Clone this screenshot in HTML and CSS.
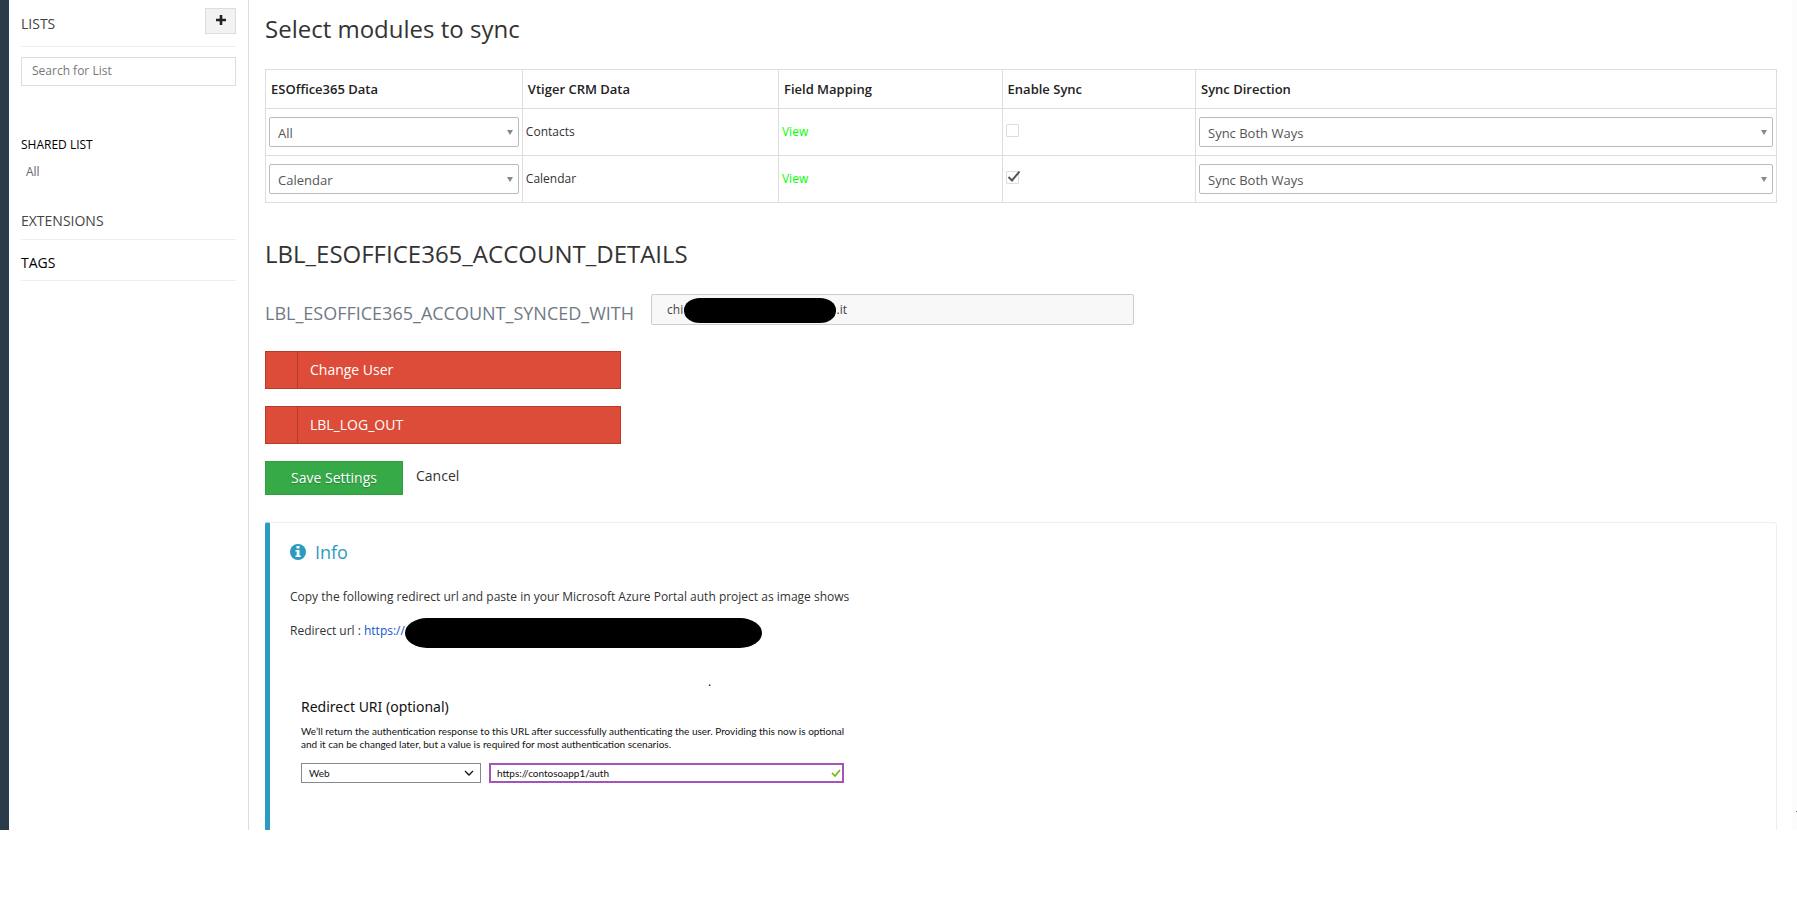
FILE: index.html
```
<!DOCTYPE html>
<html lang="en">
<head>
<meta charset="utf-8">
<title>Select modules to sync</title>
<link rel="stylesheet" href="styles.css">
</head>
<body>
<div class="app">
  <div class="rail"></div>
  <aside class="sidebar">
    <div class="lists-head">
      <h2 class="side-title">LISTS</h2>
      <button class="add" type="button" aria-label="Add list">
        <svg width="10" height="10" viewBox="0 0 10 10"><path d="M3.700 0h2.600v3.700H10v2.600H6.300V10H3.700V6.300H0V3.700h3.700z" fill="#222"/></svg>
      </button>
    </div>
    <input class="search" type="text" placeholder="Search for List" aria-label="Search for List">
    <h3 class="shared">SHARED LIST</h3>
    <a class="shared-item" href="#">All</a>
    <h2 class="side-title extensions">EXTENSIONS</h2>
    <h2 class="side-title tags">TAGS</h2>
  </aside>
  <main class="content">
    <h1 class="title">Select modules to sync</h1>
    <table class="modules">
      <colgroup><col class="c-data"><col class="c-crm"><col class="c-map"><col class="c-enable"><col></colgroup>
      <thead>
        <tr><th>ESOffice365 Data</th><th>Vtiger CRM Data</th><th>Field Mapping</th><th>Enable Sync</th><th>Sync Direction</th></tr>
      </thead>
      <tbody>
        <tr>
          <td><div class="pick"><select aria-label="Contacts source"><option>All</option></select></div></td>
          <td>Contacts</td>
          <td><a class="view" href="#">View</a></td>
          <td><span class="tick"><input class="check" type="checkbox" aria-label="Enable contacts sync"></span></td>
          <td><div class="pick"><select aria-label="Contacts sync direction"><option>Sync Both Ways</option></select></div></td>
        </tr>
        <tr>
          <td><div class="pick"><select aria-label="Calendar source"><option>Calendar</option></select></div></td>
          <td>Calendar</td>
          <td><a class="view" href="#">View</a></td>
          <td><span class="tick"><input class="check" type="checkbox" checked aria-label="Enable calendar sync"><svg width="13" height="12" viewBox="0 0 13 12"><path d="M1.500 6L5 9.500L12.500 0.500" fill="none" stroke="#555" stroke-width="2"/></svg></span></td>
          <td><div class="pick"><select aria-label="Calendar sync direction"><option>Sync Both Ways</option></select></div></td>
        </tr>
      </tbody>
    </table>
    <h1 class="title details">LBL_ESOFFICE365_ACCOUNT_DETAILS</h1>
    <div class="account">
      <label class="account-label" for="acct">LBL_ESOFFICE365_ACCOUNT_SYNCED_WITH</label>
      <div class="account-field">
        <input id="acct" type="text" readonly value="chi&#8195;&#8195;&#8195;&#8195;&#8195;&#8195;&#8195;&#8195;&#8195;&#8195;&#8195;&#8195;&#160;&#160;&#160;.it">
        <span class="mask mask-account"></span>
      </div>
    </div>
    <button class="danger" type="button"><span class="danger-icon"></span><span class="danger-text">Change User</span></button>
    <button class="danger" type="button"><span class="danger-icon"></span><span class="danger-text">LBL_LOG_OUT</span></button>
    <div class="actions">
      <button class="save" type="button">Save Settings</button>
      <a class="cancel" href="#">Cancel</a>
    </div>
    <section class="info">
      <h2 class="info-title">
        <svg width="16" height="16" viewBox="0 0 16 16"><circle cx="8" cy="8" r="8" fill="#2b9cbf"/><path d="M6.500 2h3v2.500h-3zM5.500 6h4v5.500h1.200V13H5.500v-1.500h1.200v-4H5.500z" fill="#fff"/></svg>
        Info
      </h2>
      <p class="info-text">Copy the following redirect url and paste in your Microsoft Azure Portal auth project as image shows</p>
      <p class="url-line"><span>Redirect url : <a class="url" href="#">https://</a></span><span class="mask mask-url"></span></p>
      <div class="dot">.</div>
      <div class="azure">
        <h3 class="azure-title">Redirect URI (optional)</h3>
        <p class="azure-text">We’ll return the authentication response to this URL after successfully authenticating the user. Providing this now is optional<br>and it can be changed later, but a value is required for most authentication scenarios.</p>
        <div class="azure-row">
          <div class="azure-pick">
            <select aria-label="Platform"><option>Web</option></select>
            <svg width="10" height="6" viewBox="0 0 10 6"><path d="M1 1l4 4 4-4" fill="none" stroke="#111" stroke-width="1.300"/></svg>
          </div>
          <div class="azure-uri">
            <input type="text" value="https://contosoapp1/auth" aria-label="Redirect URI">
            <svg width="10" height="8" viewBox="0 0 10 8"><path d="M1 4l3 3 5-6" fill="none" stroke="#6bb700" stroke-width="1.600"/></svg>
          </div>
        </div>
      </div>
    </section>
  </main>
  <div class="edge"></div>
</div>
</body>
</html>
```
FILE: styles.css
```
* { box-sizing: border-box; }
body {
  margin: 0;
  background: #fff;
  color: #333;
  font: 12px/18px "Open Sans", "Noto Sans", sans-serif;
}
h1, h2, h3, p { margin: 0; font-weight: 400; }
a { color: inherit; text-decoration: none; }
input, select, button { font: inherit; color: inherit; margin: 0; border-radius: 0; }
.app { display: flex; }
.rail { flex: 0 0 9px; background: #2c3b49; }
.sidebar {
  flex: 0 0 240px;
  padding: 0 12px;
  border-right: 1px solid #ddd;
}
.lists-head {
  display: flex;
  justify-content: space-between;
  height: 47px;
  padding-top: 8px;
  border-bottom: 1px solid #eee;
}
.side-title { font-size: 14px; line-height: 20px; color: #444; }
.lists-head .side-title { padding-top: 6px; }
.add {
  display: flex;
  align-items: center;
  justify-content: center;
  width: 31px;
  height: 26px;
  padding: 0 0 2px;
  background: #f2f2f2;
  border: 1px solid #ddd;
}
.search {
  display: block;
  width: 100%;
  height: 29px;
  margin-top: 10px;
  padding: 0 10px 2px;
  border: 1px solid #ddd;
  background: #fff;
}
.search::placeholder { color: #777; opacity: 1; }
.shared { margin-top: 50px; font-size: 12px; line-height: 18px; color: #000; }
.shared-item { display: block; margin-top: 9px; padding-left: 5px; color: #666; }
.extensions, .tags { border-bottom: 1px solid #eee; }
.extensions { margin-top: 30px; padding-bottom: 8px; }
.tags { padding: 13px 0 7px; color: #000; }
.content {
  flex: 1;
  min-width: 0;
  padding: 13px 15px 0 16px;
}
.title { font-size: 24px; line-height: 32px; }
.modules {
  width: 100%;
  margin-top: 24px;
  border-collapse: collapse;
  table-layout: fixed;
}
.c-data { width: 17%; }
.c-crm { width: 16.95%; }
.c-map { width: 14.8%; }
.c-enable { width: 12.8%; }
.modules th, .modules td { border: 1px solid #ddd; text-align: left; }
.modules th { height: 39px; padding: 0 5px; font-size: 13px; font-weight: 600; color: #222; }
.modules td { height: 47px; padding: 0 3px; vertical-align: middle; }
.view { color: #0f0; }
.pick { position: relative; }
.pick select {
  display: block;
  appearance: none;
  width: 100%;
  height: 30px;
  padding: 2px 8px 0;
  border: 1px solid #bbb;
  border-radius: 2px;
  background: #fff;
  font-size: 13px;
  color: #555;
}
.pick::after {
  content: "";
  position: absolute;
  right: 6px;
  top: 13px;
  border: 3px solid transparent;
  border-top: 5px solid #888;
  border-bottom: 0;
}
.tick { position: relative; display: block; padding-bottom: 3px; }
.check {
  display: block;
  appearance: none;
  width: 13px;
  height: 13px;
  border: 1px solid #ddd;
  border-radius: 1px;
  background: #fff;
}
.tick svg { position: absolute; left: 1px; top: 0; pointer-events: none; }
.details { margin-top: 35px; }
.account { display: flex; align-items: flex-start; gap: 17px; margin-top: 24px; }
.account-label { padding-top: 7px; font-size: 18px; line-height: 24px; color: #6f7a85; }
.account-field { position: relative; width: 483px; }
.account-field input {
  display: block;
  width: 100%;
  height: 31px;
  padding: 0 15px;
  border: 1px solid #ccc;
  border-radius: 2px;
  background: #f8f8f8;
  color: #444;
}
.mask { background: #000; }
.mask-account {
  position: absolute;
  left: 33px;
  top: 4px;
  width: 152px;
  height: 25px;
  border-radius: 16px / 12px;
}
.danger {
  display: flex;
  width: 356px;
  height: 38px;
  margin-top: 17px;
  padding: 0;
  border: 1px solid #b63b2b;
  background: #dd4b39;
  color: #fff;
  font-size: 14px;
  text-align: left;
}
.account + .danger { margin-top: 26px; }
.danger-icon { width: 32px; align-self: stretch; border-right: 1px solid #b63b2b; }
.danger-text { align-self: center; padding-left: 12px; }
.actions { display: flex; gap: 13px; margin-top: 17px; font-size: 14px; }
.save {
  width: 138px;
  height: 34px;
  padding: 0;
  border: 1px solid #2f9e41;
  background: #35aa47;
  color: #fff;
  text-shadow: 0 1px 1px #0004;
}
.cancel { padding-top: 6px; }
.info {
  margin-top: 27px;
  padding: 18px 20px 47px;
  border: 1px solid #eee;
  border-left: 5px solid #2b9cbf;
  border-bottom: 0;
  border-radius: 3px 3px 0 0;
}
.info-title { display: flex; align-items: center; gap: 9px; font-size: 18px; line-height: 22px; color: #2b9cbf; }
.info-text { margin-top: 25px; }
.url-line { display: flex; margin-top: 12px; }
.url-line > span:first-child { padding-top: 4px; }
.url { color: #15c; }
.mask-url { width: 357px; height: 30px; border-radius: 22px / 15px; }
.dot { padding: 25px 0 0 418px; color: #000; }
.azure { padding: 6px 0 0 11px; color: #111; font-family: "Noto Sans", sans-serif; }
.azure-title { font-size: 14px; line-height: 20px; }
.azure-text { margin-top: 8px; font: 10px/13px Lato, sans-serif; white-space: nowrap; }
.azure-row { display: flex; gap: 8px; margin-top: 12px; font: 10px/16px Lato, sans-serif; }
.azure-pick, .azure-uri { position: relative; }
.azure-pick { width: 180px; }
.azure-uri { width: 355px; }
.azure-row select, .azure-row input {
  display: block;
  appearance: none;
  width: 100%;
  height: 20px;
  padding: 0 7px;
  border: 1px solid #888;
  background: #fff;
}
.azure-row input { padding: 0 6px; border: 2px solid #a453b9; }
.azure-pick svg { position: absolute; right: 7px; top: 7px; pointer-events: none; }
.azure-uri svg { position: absolute; right: 3px; top: 6px; }
.edge {
  display: flex;
  flex-direction: column;
  justify-content: flex-end;
  align-items: flex-end;
  flex: 0 0 5px;
  padding-bottom: 18px;
  background: #fcfcfc;
}
.edge::after { content: ""; width: 1px; height: 1px; background: #777; }
```
